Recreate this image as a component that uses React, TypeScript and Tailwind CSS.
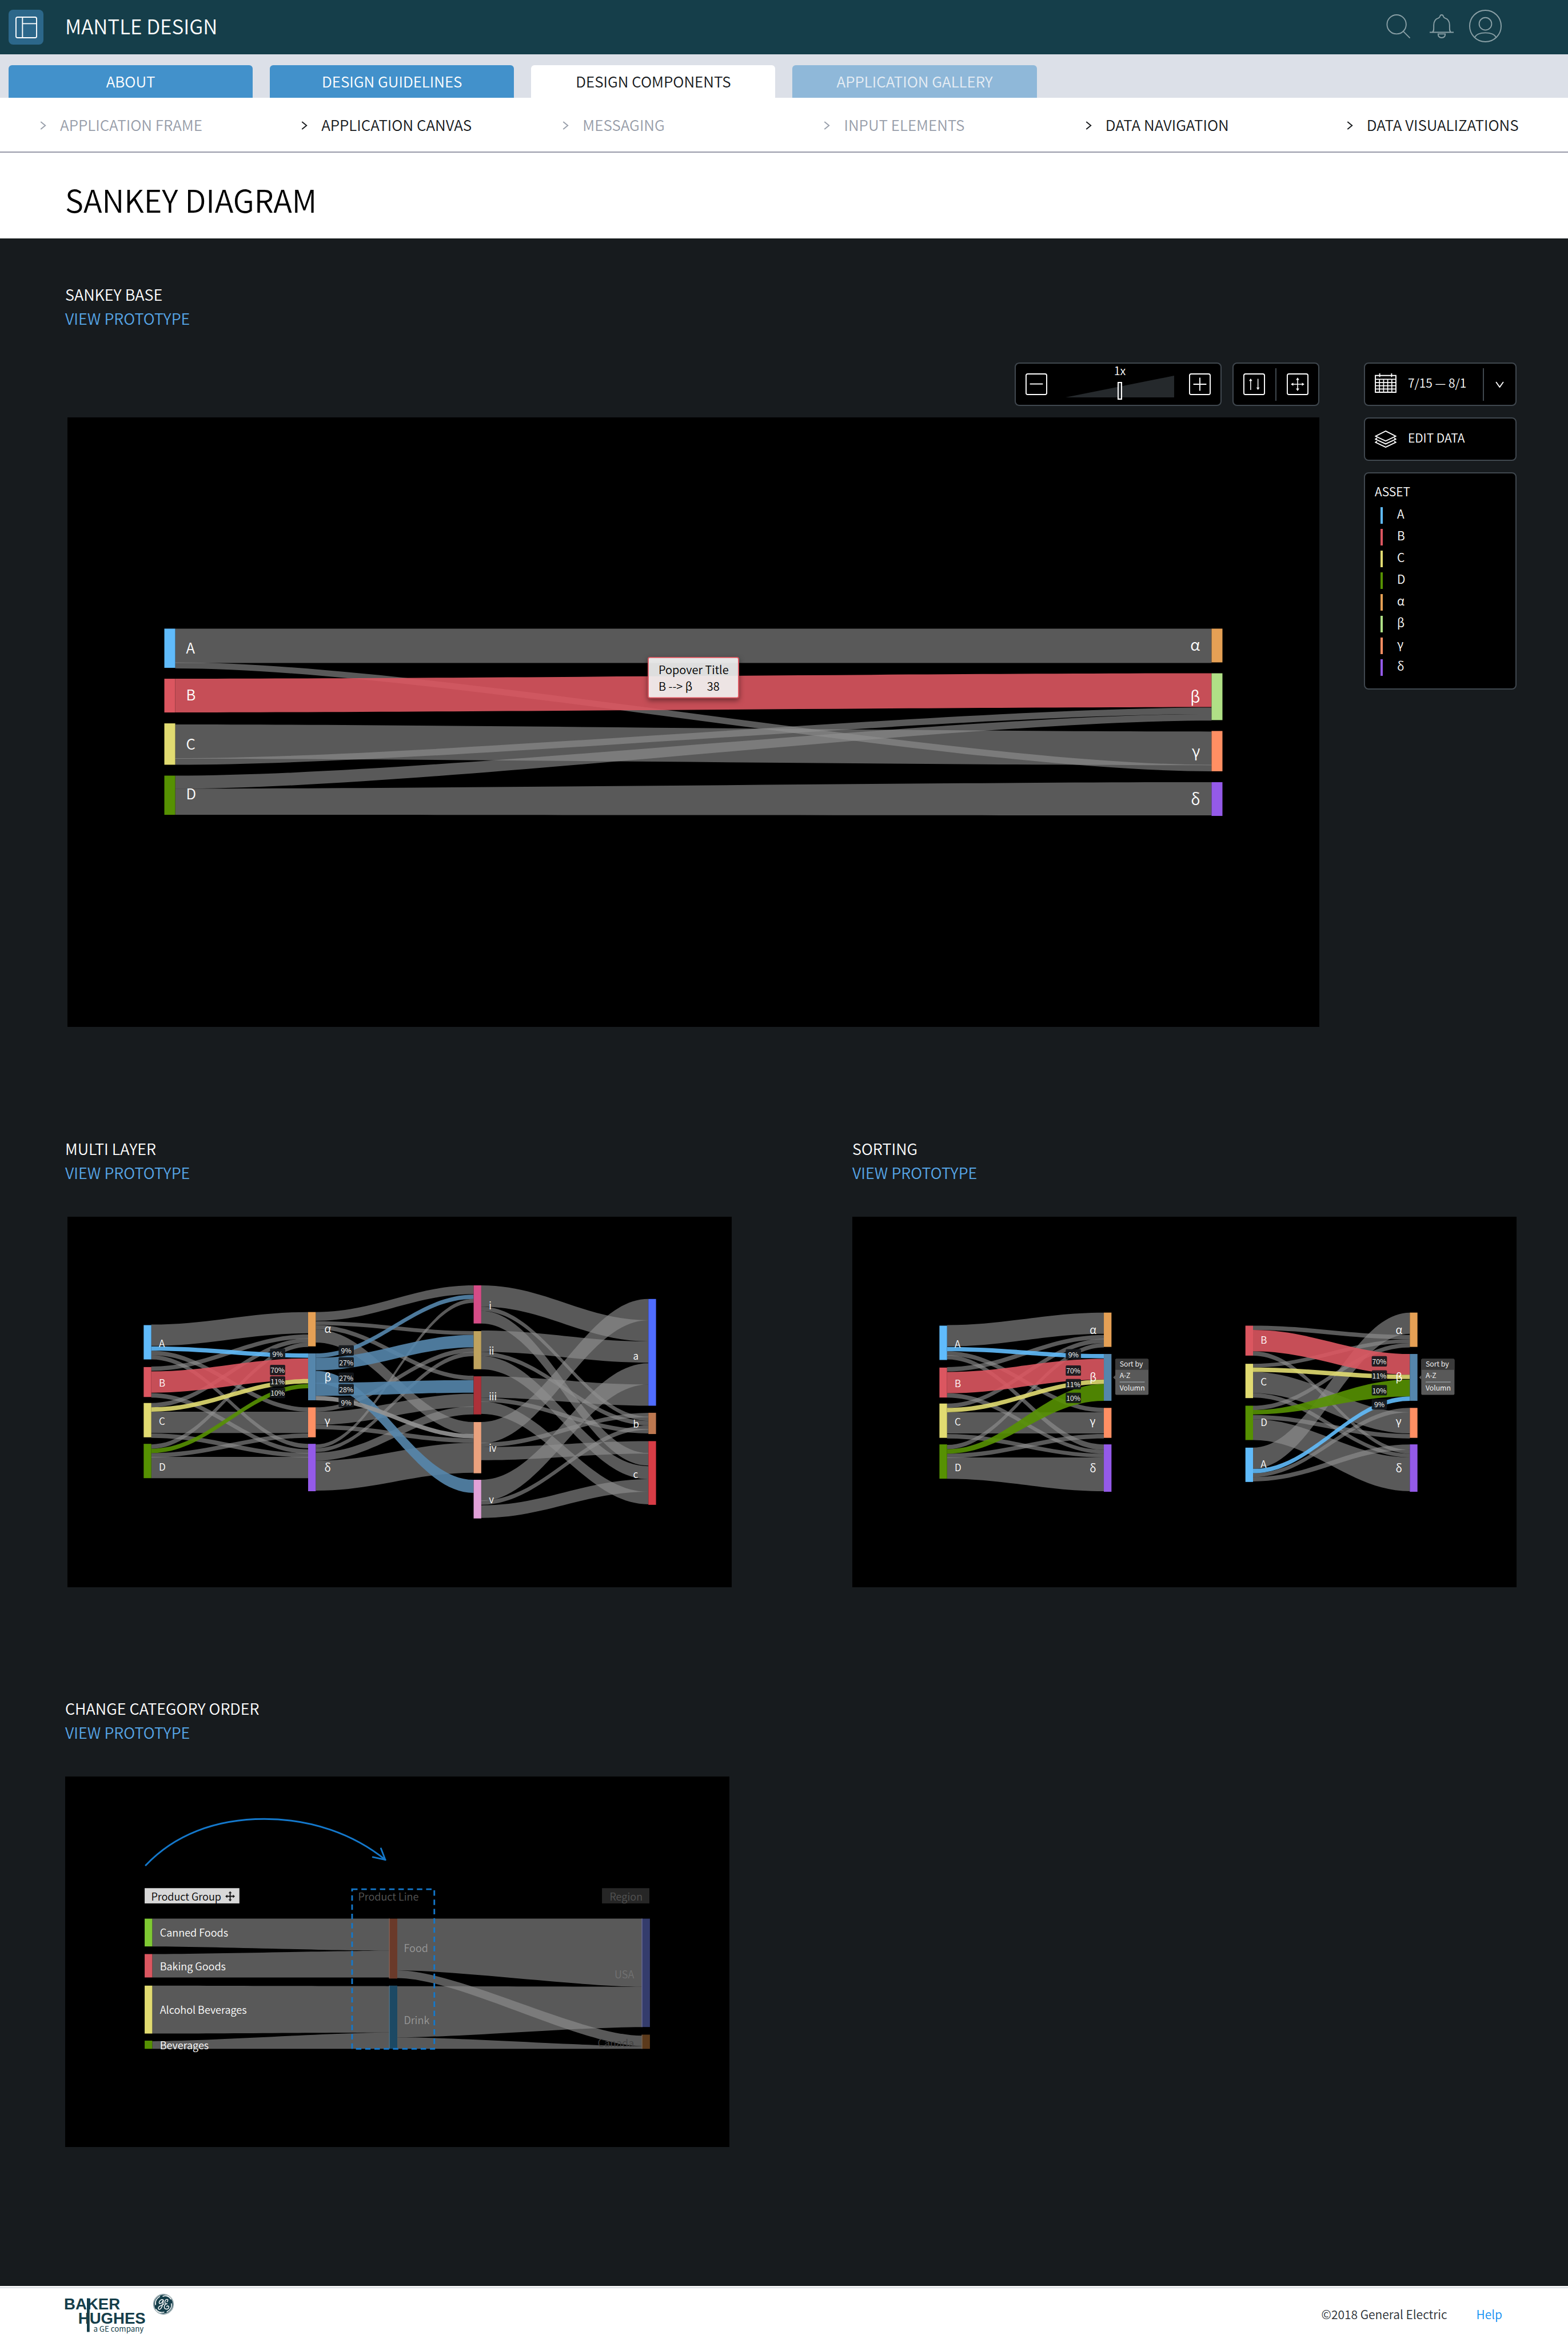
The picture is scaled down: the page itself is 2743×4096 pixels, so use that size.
import type { ReactNode } from "react";

const GRAY = "#909090";
const RED = "#db5660";
const SKY = "#60bbfb";
const YELLOW = "#e1db71";
const GREEN = "#569102";
const STEEL = "#5586ac";
const ORANGE = "#e5a055";
const CORAL = "#ff8f63";
const PURPLE = "#945ae8";

type Node = [x: number, y: number, height: number, color: string];
type Link = [y0: number, h0: number, y1: number, h1: number, color?: string];
type Label = [x: number, y: number, text: string];

/* A ribbon between two columns, with its own thickness at each end. */
function band(x0: number, x1: number, [y0, h0, y1, h1]: Link, k: number) {
  const c = (x1 - x0) * k;
  return `M${x0} ${y0} C${x0 + c} ${y0} ${x1 - c} ${y1} ${x1} ${y1} V${y1 + h1} C${x1 - c} ${y1 + h1} ${x0 + c} ${y0 + h0} ${x0} ${y0 + h0} Z`;
}

function Links({ x0, x1, links, k }: { x0: number; x1: number; links: Link[]; k: number }) {
  const ordered = [...links.filter((l) => !l[4]), ...links.filter((l) => l[4])];
  return (
    <g>
      {ordered.map((l, i) => (
        <path key={i} d={band(x0, x1, l, k)} fill={l[4] ?? GRAY} fillOpacity={l[4] ? 0.9 : 0.62} />
      ))}
    </g>
  );
}

function Nodes({ nodes, width }: { nodes: Node[]; width: number }) {
  return (
    <g>
      {nodes.map(([x, y, h, color]) => (
        <rect key={`${x}-${y}`} x={x} y={y} width={width} height={h} fill={color} />
      ))}
    </g>
  );
}

function Percent({ x, y, text }: { x: number; y: number; text: string }) {
  return (
    <g>
      <rect x={x} y={y} width={28} height={19} rx={2} fill="#14171b" fillOpacity={0.92} />
      <text x={x + 14} y={y + 15} textAnchor="middle" className="fill-white text-[13px]">
        {text}
      </text>
    </g>
  );
}

function Labels({ items, className, anchor = "start" }: { items: Label[]; className: string; anchor?: "start" | "end" }) {
  return (
    <g className={className}>
      {items.map(([x, y, t]) => (
        <text key={`${x}-${y}`} x={x} y={y} textAnchor={anchor}>
          {t}
        </text>
      ))}
    </g>
  );
}

function Canvas({ width, height, label, children }: { width: number; height: number; label: string; children: ReactNode }) {
  return (
    <div className="bg-black">
      <svg viewBox={`0 0 ${width} ${height}`} role="img" aria-label={label} className="block h-auto w-full">
        {children}
      </svg>
    </div>
  );
}

function BaseChart() {
  const links: Link[] = [
    [388, 63, 388, 63],
    [450, 11, 638, 12],
    [564, 63, 577, 62],
    [626, 12, 533, 12],
    [658, 24, 545, 12],
    [682, 48, 670, 61],
    [480, 62, 470, 62, RED],
  ];
  const nodes: Node[] = [
    [178, 388, 72, SKY],
    [178, 480, 62, RED],
    [178, 562, 76, YELLOW],
    [178, 658, 72, GREEN],
    [2102, 388, 62, ORANGE],
    [2102, 470, 86, "#b0e086"],
    [2102, 576, 74, CORAL],
    [2102, 670, 62, PURPLE],
  ];
  return (
    <Canvas width={2300} height={1120} label="Sankey diagram from A, B, C, D to α, β, γ, δ">
      <Links x0={198} x1={2102} links={links} k={0.25} />
      <Nodes nodes={nodes} width={20} />
      <Labels className="fill-white text-[27px]" items={[[218, 434, "A"], [218, 520, "B"], [218, 610, "C"], [218, 702, "D"]]} />
      <Labels
        className="fill-white text-[29px]"
        anchor="end"
        items={[[2081, 428, "α"], [2081, 524, "β"], [2081, 624, "γ"], [2081, 712, "δ"]]}
      />
      <g className="drop-shadow-[0_4px_5px_rgba(0,0,0,0.5)]">
        <rect x={1067} y={441} width={166} height={74} rx={3} fill="#ffffff" fillOpacity={0.87} stroke={RED} strokeWidth={2} />
      </g>
      <g className="fill-black text-[21px]">
        <text x={1086} y={472}>Popover Title</text>
        <text x={1086} y={502}>B --&gt; β</text>
        <text x={1175} y={502}>38</text>
      </g>
    </Canvas>
  );
}

const groupLabels = ["α", "β", "γ", "δ"];

function MultiLayerChart() {
  const first: Link[] = [
    [198, 39, 175, 39],
    [246, 8, 350, 8],
    [254, 8, 417, 8],
    [275, 8, 216, 8],
    [324, 8, 427, 8],
    [342, 8, 223, 8],
    [358, 39, 358, 39],
    [398, 8, 434, 8],
    [418, 8, 231, 8],
    [434, 8, 398, 8],
    [441, 39, 441, 39],
    [284, 39, 260, 39, RED],
    [238, 8, 251, 8, SKY],
    [350, 8, 298, 8, YELLOW],
    [426, 8, 307, 8, GREEN],
  ];
  const second: Link[] = [
    [175, 16, 126, 16],
    [192, 7, 210, 7],
    [199, 8, 292, 8],
    [207, 24, 377, 23],
    [350, 8, 241, 8],
    [358, 24, 325, 24],
    [382, 8, 407, 8],
    [418, 7, 151, 7],
    [425, 7, 248, 8],
    [433, 15, 348, 15],
    [448, 55, 415, 55],
    [251, 8, 143, 8, STEEL],
    [259, 23, 217, 23, STEEL],
    [283, 23, 483, 24, STEEL],
    [305, 24, 300, 23, STEEL],
    [329, 8, 399, 8, "#939393"],
  ];
  const third: Link[] = [
    [126, 39, 190, 39],
    [165, 8, 367, 8],
    [173, 23, 434, 23],
    [209, 39, 229, 39],
    [248, 8, 375, 8],
    [256, 24, 458, 24],
    [293, 39, 308, 39],
    [332, 8, 390, 8],
    [339, 23, 505, 23],
    [377, 39, 151, 39],
    [415, 8, 360, 8],
    [423, 24, 412, 23],
    [483, 39, 269, 39],
    [521, 8, 383, 8],
    [530, 23, 482, 23],
  ];
  const nodes: Node[] = [
    [140, 199, 63, SKY],
    [140, 276, 55, RED],
    [140, 342, 63, YELLOW],
    [140, 417, 63, GREEN],
    [442, 175, 63, ORANGE],
    [442, 251, 86, STEEL],
    [442, 350, 55, CORAL],
    [442, 417, 87, PURPLE],
    [746, 126, 70, "#d54c87"],
    [746, 210, 70, "#bfa35e"],
    [746, 293, 70, "#ad3139"],
    [746, 377, 94, "#eba27e"],
    [746, 483, 71, "#e1a1d8"],
    [1067, 151, 196, "#4f6cff"],
    [1067, 360, 39, "#bd7850"],
    [1067, 412, 117, "#d83c46"],
  ];
  return (
    <Canvas width={1220} height={680} label="Multi layer Sankey diagram">
      <Links x0={154} x1={442} links={first} k={0.38} />
      <Links x0={456} x1={746} links={second} k={0.38} />
      <Links x0={760} x1={1067} links={third} k={0.38} />
      <Nodes nodes={nodes} width={14} />
      <Labels
        className="fill-white text-[18px]"
        items={[
          [168, 239, "A"], [168, 312, "B"], [168, 382, "C"], [168, 466, "D"],
          [774, 170, "i"], [774, 253, "ii"], [774, 337, "iii"], [774, 432, "iv"], [774, 526, "v"],
          [1039, 263, "a"], [1039, 387, "b"], [1039, 480, "c"],
        ]}
      />
      <Labels className="fill-white text-[20px]" items={[213, 302, 382, 468].map((y, i): Label => [472, y, groupLabels[i]])} />
      <Percent x={372} y={242} text="9%" />
      <Percent x={372} y={272} text="70%" />
      <Percent x={372} y={293} text="11%" />
      <Percent x={372} y={314} text="10%" />
      <Percent x={498} y={236} text="9%" />
      <Percent x={498} y={258} text="27%" />
      <Percent x={498} y={286} text="27%" />
      <Percent x={498} y={307} text="28%" />
      <Percent x={498} y={331} text="9%" />
    </Canvas>
  );
}

function SortMenu({ x }: { x: number }) {
  return (
    <g>
      <path d={`M${x - 4} 295 L${x} 291 V299 Z`} fill="#595959" />
      <rect x={x} y={261} width={61} height={66} rx={2} fill="#595959" />
      <path d={`M${x} 281 V263 a2 2 0 0 1 2 -2 H${x + 59} a2 2 0 0 1 2 2 V281 Z`} fill="#3a3a3a" />
      <path d={`M${x + 8} 303.5 H${x + 54}`} stroke="#b3bdc4" strokeWidth={1} />
      <g className="fill-white text-[13px]">
        <text x={x + 8} y={275}>Sort by</text>
        <text x={x + 8} y={296}>A-Z</text>
        <text x={x + 8} y={319}>Volumn</text>
      </g>
    </g>
  );
}

function rightNodes(x: number): Node[] {
  return [
    [x, 176, 63, ORANGE],
    [x, 252, 86, STEEL],
    [x, 351, 55, CORAL],
    [x, 418, 87, PURPLE],
  ];
}

function SortingChart() {
  const before: Link[] = [
    [199, 39, 176, 39],
    [247, 8, 351, 8],
    [254, 8, 418, 10],
    [276, 8, 217, 8],
    [324, 8, 428, 7],
    [343, 8, 224, 8],
    [359, 39, 359, 39],
    [399, 8, 435, 7],
    [419, 8, 232, 8],
    [435, 8, 399, 8],
    [442, 39, 442, 62],
    [285, 39, 261, 38, RED],
    [239, 8, 252, 8, SKY],
    [351, 8, 299, 8, YELLOW],
    [427, 8, 307, 31, GREEN],
  ];
  const after: Link[] = [
    [200, 8, 217, 8],
    [247, 8, 428, 7],
    [270, 7, 225, 7],
    [285, 39, 359, 39],
    [324, 8, 435, 7],
    [347, 8, 232, 8],
    [364, 8, 399, 8],
    [372, 38, 442, 62],
    [424, 39, 176, 39],
    [471, 7, 351, 8],
    [478, 8, 418, 10],
    [208, 39, 252, 38, RED],
    [277, 8, 290, 8, YELLOW],
    [355, 8, 299, 31, GREEN],
    [463, 8, 330, 8, SKY],
  ];
  const nodes: Node[] = [
    [160, 200, 63, SKY],
    [160, 277, 55, RED],
    [160, 343, 63, YELLOW],
    [160, 418, 63, GREEN],
    ...rightNodes(462),
    [722, 200, 55, RED],
    [722, 270, 63, YELLOW],
    [722, 347, 63, GREEN],
    [722, 424, 63, SKY],
    ...rightNodes(1024),
  ];
  return (
    <Canvas width={1220} height={680} label="Sankey diagram before and after sorting">
      <Links x0={174} x1={462} links={before} k={0.38} />
      <Links x0={736} x1={1024} links={after} k={0.38} />
      <Nodes nodes={nodes} width={14} />
      <Percent x={392} y={243} text="9%" />
      <Percent x={392} y={273} text="70%" />
      <Percent x={392} y={298} text="11%" />
      <Percent x={392} y={323} text="10%" />
      <Percent x={954} y={256} text="70%" />
      <Percent x={954} y={282} text="11%" />
      <Percent x={954} y={309} text="10%" />
      <Percent x={954} y={335} text="9%" />
      <Labels
        className="fill-white text-[18px]"
        items={[
          [188, 240, "A"], [188, 313, "B"], [188, 383, "C"], [188, 467, "D"],
          [750, 233, "B"], [750, 310, "C"], [750, 384, "D"], [750, 461, "A"],
        ]}
      />
      <Labels
        className="fill-white text-[20px]"
        items={[436, 998].flatMap((x) => [215, 302, 383, 469].map((y, i): Label => [x, y, groupLabels[i]]))}
      />
      <SortMenu x={483} />
      <SortMenu x={1045} />
    </Canvas>
  );
}

function CategoryChart() {
  const first: Link[] = [
    [261, 51, 261, 59],
    [326, 43, 320, 49],
    [384, 88, 385, 85],
    [486, 14, 470, 30],
  ];
  const second: Link[] = [
    [261, 95, 261, 125],
    [356, 14, 476, 19],
    [385, 94, 386, 74],
    [479, 21, 495, 5],
  ];
  const nodes: Node[] = [
    [146, 261, 51, "#7fc933"],
    [146, 326, 43, RED],
    [146, 384, 88, YELLOW],
    [146, 485, 15, GREEN],
    [596, 261, 110, "#6a3a2a"],
    [596, 384, 116, "#1c4964"],
    [1060, 261, 199, "#343c6c"],
    [1060, 474, 26, "#5c3a1b"],
  ];
  return (
    <Canvas width={1220} height={680} label="Dragging a category to change its order">
      <g fill="none" stroke="#1478cb" strokeWidth={3} strokeLinecap="round">
        <path d="M148 163 C200 108 275 78 366 78 C452 78 530 106 588 153" />
        <path d="M580 132 L588 153 L565 148" strokeLinejoin="round" />
      </g>
      <Links x0={160} x1={596} links={first} k={0.25} />
      <Links x0={610} x1={1060} links={second} k={0.25} />
      <Nodes nodes={nodes} width={14} />
      <g strokeWidth={1.5}>
        <path d="M595.5 261 V371" stroke="#8a6052" />
        <path d="M595.5 384 V500" stroke="#4f7287" />
        <path d="M1059.5 261 V460" stroke="#66699a" />
        <path d="M1059.5 474 V500" stroke="#7a6350" />
      </g>
      <rect x={527} y={207} width={151} height={293} fill="none" stroke="#1478cb" strokeWidth={3} strokeDasharray="10 7" />
      <rect x={146} y={205} width={174} height={28} fill="#d8d8d8" />
      <rect x={986} y={205} width={87} height={28} fill="#262626" />
      <g stroke="#111111" strokeWidth={2} fill="#111111">
        <path d="M303 214 V226 M297 220 H309" />
        <path d="M303 211 l2.5 3 h-5z M303 229 l2.5 -3 h-5z M294.5 220 l3 -2.5 v5z M311.5 220 l-3 -2.5 v5z" strokeWidth={0.6} />
      </g>
      <g className="text-[19px]">
        <text x={158} y={228} className="fill-black">Product Group</text>
        <text x={538} y={228} className="fill-[#575757]">Product Line</text>
        <text x={1000} y={228} className="fill-[#535353]">Region</text>
        <text x={622} y={322} className="fill-[#989898]">Food</text>
        <text x={622} y={455} className="fill-[#989898]">Drink</text>
        <text x={1045} y={371} textAnchor="end" className="fill-[#737373]">USA</text>
        <text x={1045} y={497} textAnchor="end" className="fill-[#424242]">Canada</text>
      </g>
      <Labels
        className="fill-white text-[19px]"
        items={[[174, 294, "Canned Foods"], [174, 356, "Baking Goods"], [174, 436, "Alcohol Beverages"], [174, 501, "Beverages"]]}
      />
    </Canvas>
  );
}

function Header() {
  return (
    <header className="flex h-[95px] items-center bg-[#153e4a] pl-[15px] pr-[116px] text-white">
      <div className="grid size-[61px] place-items-center rounded-lg bg-[#2c678a]">
        <svg viewBox="0 0 40 40" className="size-[38px]" fill="none" stroke="white" strokeWidth={2} aria-hidden="true">
          <rect x={1} y={1} width={38} height={38} rx={3} />
          <path d="M13 1 V39 M13 13 H39" />
        </svg>
      </div>
      <span className="ml-[38px] pb-1.5 text-[35px] leading-[48px]">MANTLE DESIGN</span>
      <div className="ml-auto flex items-center pb-1 text-[#8aa0a6]">
        <button type="button" aria-label="Search" className="mr-[33px]">
          <svg viewBox="0 0 44 44" className="size-[42px]" fill="none" stroke="currentColor" strokeWidth={2}>
            <circle cx={19} cy={18.5} r={17.5} />
            <path d="M31 31 L43.5 43.5" />
          </svg>
        </button>
        <button type="button" aria-label="Notifications" className="mr-[26px]">
          <svg viewBox="0 0 46 44" className="h-[42px] w-[44px]" fill="none" stroke="currentColor" strokeWidth={2}>
            <path d="M1 33 H45 M6 33 C8.5 31 8.5 29 8.5 25 V20 C8.5 13 12 8.5 17 7 C19 6 19.5 5 20 3.5 C20.5 1.5 21.5 1 23 1 C24.5 1 25.5 1.5 26 3.5 C26.5 5 27 6 29 7 C34 8.5 37.5 13 37.5 20 V25 C37.5 29 37.5 31 40 33" />
            <path d="M16.5 36 H29.5 C29.5 40.5 27 43 23 43 C19 43 16.5 40.5 16.5 36 Z" />
          </svg>
        </button>
        <button type="button" aria-label="Account">
          <svg viewBox="0 0 60 60" className="size-[57px]" fill="none" stroke="currentColor" strokeWidth={2}>
            <circle cx={30} cy={30} r={29} />
            <circle cx={30} cy={26} r={11.5} />
            <path d="M10 51 C13 45 21 42.5 30 42.5 C39 42.5 47 45 50 51" />
          </svg>
        </button>
      </div>
    </header>
  );
}

const tabs = [
  { label: "ABOUT", style: "bg-[#4291cb] text-white" },
  { label: "DESIGN GUIDELINES", style: "bg-[#4291cb] text-white" },
  { label: "DESIGN COMPONENTS", style: "bg-white text-[#15181b]" },
  { label: "APPLICATION GALLERY", style: "bg-[#8fb8d9] text-[#e6edf4]" },
];

const subItems = [
  { label: "APPLICATION FRAME", muted: true },
  { label: "APPLICATION CANVAS", muted: false },
  { label: "MESSAGING", muted: true },
  { label: "INPUT ELEMENTS", muted: true },
  { label: "DATA NAVIGATION", muted: false },
  { label: "DATA VISUALIZATIONS", muted: false },
];

function Navigation() {
  return (
    <>
      <nav aria-label="Sections" className="grid grid-cols-6 bg-[#dce0e8] pt-[19px] text-[26px]">
        {tabs.map((t) => (
          <a key={t.label} href="#" className={`mx-[15px] flex h-[57px] items-center justify-center rounded-t-md pb-[3px] ${t.style}`}>
            {t.label}
          </a>
        ))}
      </nav>
      <nav aria-label="Categories" className="grid h-24 grid-cols-6 border-b-2 border-[#9799a8] bg-white text-[26px]">
        {subItems.map((s) => (
          <a
            key={s.label}
            href="#"
            className={`flex items-center whitespace-nowrap pb-0.5 pl-[70px] ${s.muted ? "text-[#989eaa]" : "text-[#15181b]"}`}
          >
            <svg viewBox="0 0 11 16" className="mr-6 mt-1 h-[15px] w-[11px]" fill="none" stroke="currentColor" strokeWidth={2} aria-hidden="true">
              <path d="M1 1 L9.5 8 L1 15" />
            </svg>
            {s.label}
          </a>
        ))}
      </nav>
    </>
  );
}

function SectionHeading({ title, className = "" }: { title: string; className?: string }) {
  return (
    <div className={`mb-14 text-[27px] leading-[42px] ${className}`}>
      <h2 className="text-white">{title}</h2>
      <a href="#" className="text-[#56a5e6]">
        VIEW PROTOTYPE
      </a>
    </div>
  );
}

function IconButton({ label, children }: { label: string; children: ReactNode }) {
  return (
    <button type="button" aria-label={label} className="size-[38px]">
      <svg viewBox="0 0 40 40" className="size-[38px]" fill="none" stroke="white" strokeWidth={2}>
        <rect x={1} y={1} width={38} height={38} rx={3} />
        {children}
      </svg>
    </button>
  );
}

function Toolbar() {
  return (
    <div className="flex justify-end gap-[19px]">
      <div className="flex h-[76px] w-[362px] items-center justify-between rounded-lg border-2 border-[#40484f] bg-black px-[17px]">
        <IconButton label="Zoom out">
          <path d="M8 19.5 H32" />
        </IconButton>
        <div className="relative ml-1.5 flex h-full w-[190px] flex-col items-center">
          <svg viewBox="0 0 190 38" className="absolute inset-x-0 top-[21px] h-[38px] w-[190px]" aria-hidden="true">
            <path d="M0 38 L190 0 V38 Z" fill="#25292c" />
          </svg>
          <label htmlFor="zoom" className="text-xl leading-6 text-white">
            1x
          </label>
          <input
            id="zoom"
            type="range"
            min={0}
            max={2}
            defaultValue={1}
            className="relative mt-2 h-[31px] w-full appearance-none bg-transparent [&::-webkit-slider-thumb]:h-[31px] [&::-webkit-slider-thumb]:w-2 [&::-webkit-slider-thumb]:appearance-none [&::-webkit-slider-thumb]:border-2 [&::-webkit-slider-thumb]:border-white [&::-webkit-slider-thumb]:bg-[#25292c]"
          />
        </div>
        <IconButton label="Zoom in">
          <path d="M8 20 H32 M20 8 V32" />
        </IconButton>
      </div>
      <div className="flex h-[76px] w-[152px] items-center justify-between rounded-lg border-2 border-[#40484f] bg-black px-[17px]">
        <IconButton label="Sort">
          <path d="M13.5 11 V30.5 M27 10 V28" strokeWidth={1.6} />
          <path d="M13.5 9.5 l3 4.5 h-6z M27 30.5 l3 -4.5 h-6z" fill="white" stroke="none" />
        </IconButton>
        <span className="h-[57px] w-0.5 bg-[#40484f]" />
        <IconButton label="Move">
          <path d="M10 20 H30 M20 10 V30" strokeWidth={1.6} />
          <path d="M20 7.5 l3 4.5 h-6z M20 32.5 l3 -4.5 h-6z M7.5 20 l4.5 -3 v6z M32.5 20 l-4.5 -3 v6z" fill="white" stroke="none" />
        </IconButton>
      </div>
    </div>
  );
}

const assets = [
  { name: "A", bar: "bg-[#60bbfb]" },
  { name: "B", bar: "bg-[#db5660]" },
  { name: "C", bar: "bg-[#e1db71]" },
  { name: "D", bar: "bg-[#569102]" },
  { name: "α", bar: "bg-[#e5a055]" },
  { name: "β", bar: "bg-[#b0e086]" },
  { name: "γ", bar: "bg-[#ff8f63]" },
  { name: "δ", bar: "bg-[#945ae8]" },
];

function Sidebar() {
  return (
    <aside className="flex w-[267px] flex-col gap-5 text-[21px] text-white">
      <button
        type="button"
        aria-haspopup="true"
        className="flex h-[76px] items-center rounded-lg border-2 border-[#40484f] bg-black pl-[17px]"
      >
        <svg viewBox="0 0 40 36" className="mb-1 h-[34px] w-[38px]" fill="none" stroke="white" strokeWidth={2} aria-hidden="true">
          <path d="M1 4 H39 V35 H1 Z M1 11 H39 M9 0 V7 M31 0 V7" />
          <path d="M1 17 H39 M1 23 H39 M1 29 H39 M8.6 11 V35 M16.2 11 V35 M23.8 11 V35 M31.4 11 V35" strokeWidth={1.8} />
        </svg>
        <span className="ml-5 flex-1 whitespace-nowrap pb-[5px] text-left">7/15 — 8/1</span>
        <span className="h-[57px] w-0.5 bg-[#40484f]" />
        <svg viewBox="0 0 16 12" className="mx-5 h-[11px] w-[15px]" fill="none" stroke="white" strokeWidth={2} aria-hidden="true">
          <path d="M1 1 L8 11 L15 1" />
        </svg>
      </button>
      <button type="button" className="flex h-[76px] items-center rounded-lg border-2 border-[#40484f] bg-black pl-[17px]">
        <svg viewBox="0 0 40 32" className="h-[30px] w-[38px]" fill="none" stroke="white" strokeWidth={2} aria-hidden="true">
          <path d="M20 1 L39 10.5 L20 19.5 L1 10.5 Z" />
          <path d="M4 14 L1 16 L20 25 L39 16 L36 14 M4 20 L1 22 L20 31 L39 22 L36 20" />
        </svg>
        <span className="ml-5 pb-[5px]">EDIT DATA</span>
      </button>
      <section className="rounded-lg border-2 border-[#40484f] bg-black px-[17px] pb-[18px] pt-3">
        <h3 className="leading-[38px]">ASSET</h3>
        <ul className="mt-1">
          {assets.map((a) => (
            <li key={a.name} className="flex h-[38px] items-center pl-[10px] leading-[38px]">
              <span className={`h-[29px] w-1 ${a.bar}`} />
              <span className="ml-[25px] pb-1.5">{a.name}</span>
            </li>
          ))}
        </ul>
      </section>
    </aside>
  );
}

function Footer() {
  return (
    <footer className="mt-0.5 flex items-center border-t-2 border-[#dde1e6] bg-white pl-[112px] pr-[115px] text-[21px]">
      <svg viewBox="-2 0 204 80" role="img" aria-label="Baker Hughes, a GE company" className="my-2 h-[76px] w-[194px]">
        <g fill="#153e4a">
          <g className="font-['Liberation_Sans'] text-[29px] font-bold">
            <text x={-2} y={31}>BAKER</text>
            <text x={24} y={57}>HUGHES</text>
          </g>
          <rect x={40} y={10} width={5} height={62} />
          <text x={52} y={72} className="text-[14px] font-normal">
            a GE company
          </text>
          <circle cx={181} cy={21} r={17.3} />
        </g>
        <circle cx={181} cy={21} r={18.5} fill="none" stroke="#153e4a" strokeWidth={0.7} />
        <g fill="none" stroke="white" strokeLinecap="round">
          <path d="M180 6.5 C186 4 192 7 194.5 11.5 M195.5 20 C197 27 193 32.5 187.5 35 M182 35.5 C175.5 37.5 169.5 34.5 167.5 30.5 M166.5 22 C165 15 169 9.5 174 7" strokeWidth={1.6} />
          <path d="M180.5 13 C178 11.5 173.5 13.5 173 17.5 C173 20.5 176.5 20.5 178.5 17.5 C179.5 16 180.5 14 181 13 C180.5 18 178.5 27 175 30 C172.5 31.5 170.5 29 172 26.5 C174 23.5 179 22.5 182 20.5" strokeWidth={1.5} />
          <path d="M187.5 16.5 C190 14.5 189.5 11.5 187 12 C184 12.5 182.5 17 184.5 19.5 C185.5 20.5 187 20.5 188 20 C184.5 20 182 23.5 182.5 27 C183.5 31 190 31 191 27 C191.5 24 188 23 187 25.5" strokeWidth={1.5} />
        </g>
      </svg>
      <span className="ml-auto text-[#2a2f35]">©2018 General Electric</span>
      <a href="#" className="ml-[51px] text-[#1290f2]">
        Help
      </a>
    </footer>
  );
}

export default function App() {
  return (
    <div className="bg-white font-['Noto_Sans_CJK_SC','Noto_Sans',sans-serif] font-[350]">
      <Header />
      <Navigation />
      <div className="flex h-[150px] items-center pl-[114px] pt-[14px]">
        <h1 className="text-[54px] leading-[72px] text-black">SANKEY DIAGRAM</h1>
      </div>
      <main className="bg-[#171b1e] pb-[243px] pl-[118px] pr-[90px] pt-[77px]">
        <section>
          <SectionHeading title="SANKEY BASE" className="-ml-1" />
          <div className="flex gap-[78px]">
            <div className="flex min-w-0 flex-1 flex-col gap-5">
              <Toolbar />
              <BaseChart />
            </div>
            <Sidebar />
          </div>
        </section>
        <div className="mt-48 grid grid-cols-2 gap-x-[211px] gap-y-[191px]">
          <section>
            <SectionHeading title="MULTI LAYER" className="-ml-1" />
            <MultiLayerChart />
          </section>
          <section>
            <SectionHeading title="SORTING" />
            <SortingChart />
          </section>
          <section className="-ml-1 mr-1">
            <SectionHeading title="CHANGE CATEGORY ORDER" />
            <CategoryChart />
          </section>
        </div>
      </main>
      <Footer />
    </div>
  );
}
